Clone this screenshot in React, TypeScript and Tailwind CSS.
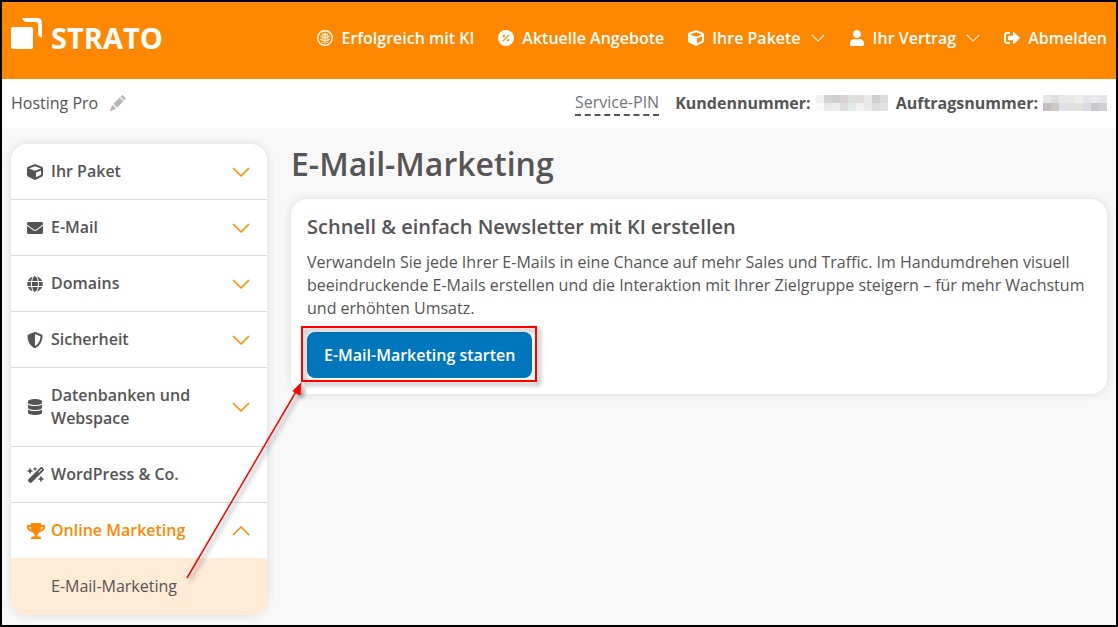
import React, { useState } from "react";
import {
  FaCube,
  FaDatabase,
  FaEnvelope,
  FaGlobe,
  FaShieldAlt,
  FaSignOutAlt,
  FaTrophy,
  FaUser,
} from "react-icons/fa";
import { FaWandMagicSparkles } from "react-icons/fa6";
import { BsPencilFill } from "react-icons/bs";

interface MenuItem {
  label: string;
  icon: React.ReactNode;
  expandable: boolean;
  children?: string[];
}

const menuItems: MenuItem[] = [
  { label: "Ihr Paket", icon: <FaCube />, expandable: true },
  { label: "E-Mail", icon: <FaEnvelope />, expandable: true },
  { label: "Domains", icon: <FaGlobe />, expandable: true },
  { label: "Sicherheit", icon: <FaShieldAlt />, expandable: true },
  { label: "Datenbanken und Webspace", icon: <FaDatabase />, expandable: true },
  { label: "WordPress & Co.", icon: <FaWandMagicSparkles size={18} />, expandable: false },
  { label: "Online Marketing", icon: <FaTrophy size={18} />, expandable: true, children: ["E-Mail-Marketing"] },
];

const customerBlocks = [
  ["#f3f0f1", "#d3d3d3", "#cfcfd3", "#dcd2d6", "#dbe0dd", "#dfdcda", "#e6e8ea", "#cfcfcf", "#dadbdf"],
  ["#fbfafa", "#e9e9e9", "#ececec", "#e0dbdf", "#e4e9e9", "#f2f2f2", "#e8eaed", "#dededf", "#e1e2e3"],
];

const orderBlocks = [
  ["#e6e6e7", "#dfdfdf", "#e8e8e8", "#e7e8e4", "#eeeeec", "#e3e5eb", "#ebebee", "#e6e6e6"],
  ["#c2bfc4", "#cfc9c6", "#dde0e8", "#e0e0e2", "#e1e2dc", "#dadae2", "#c8c8ca", "#cfcfd6"],
];

function Chevron({ up = false, thin = false, className }: { up?: boolean; thin?: boolean; className: string }) {
  return (
    <svg viewBox="0 0 18 10" fill="none" stroke="currentColor" className={className} aria-hidden="true">
      <path d={up ? "M1 9L9 1L17 9" : "M1 1L9 9L17 1"} strokeWidth={thin ? 1.3 : 1.5} />
    </svg>
  );
}

function BrainIcon() {
  return (
    <svg width="16" height="16" viewBox="0 0 16 16" fill="none" stroke="currentColor" aria-hidden="true">
      <circle cx="8" cy="8" r="7.3" strokeWidth="1.4" />
      <path
        d="M8 2.5v11M8 4.5H6.2L5 3.6M8 4.5h1.8L11 3.6M8 7.3H5.5L3.4 6M8 7.3h2.5L12.6 6M8 10.2H5.2L3.2 9M8 10.2h2.8l2-1.2M6.5 12.3H4.8M9.5 12.3h1.7M5.2 5.8h1.3M9.5 5.8h1.3M5 8.8h1.3M9.7 8.8H11"
        strokeWidth="1.1"
      />
    </svg>
  );
}

function PercentIcon() {
  return (
    <svg width="16" height="16" viewBox="0 0 16 16" aria-hidden="true">
      <circle cx="8" cy="8" r="8" fill="currentColor" />
      <path d="M4.8 11.2L11.2 4.8" stroke="#ff8800" strokeWidth="1.2" />
      <g fill="#ff8800">
        <circle cx="5.8" cy="5.9" r="1.2" />
        <circle cx="10.2" cy="10.1" r="1.2" />
      </g>
    </svg>
  );
}

function Logo() {
  return (
    <a href="#" className="flex items-start text-white" aria-label="STRATO">
      <svg width="32" height="32" viewBox="0 0 32 32" fill="currentColor" aria-hidden="true">
        <rect x="0" y="9" width="22" height="22" rx="2" />
        <path d="M11 0H26Q31 0 31 5V20Q27 19 27 15V6Q27 4 25 4H16Q12 4 11 0Z" />
      </svg>
      <span className="mt-1 ml-2 text-[29px] leading-8 font-bold">STRATO</span>
    </a>
  );
}

function Redacted({ rows }: { rows: string[][] }) {
  return (
    <svg width={rows[0].length * 8} height="16" shapeRendering="crispEdges" aria-hidden="true">
      {rows.map((row, y) =>
        row.map((color, x) => (
          <rect key={`${x}-${y}`} x={x * 8} y={y * 8} width="8" height="8" fill={color} />
        ))
      )}
    </svg>
  );
}

function Header() {
  return (
    <header className="h-[77px] pt-4 px-[9px] flex items-start justify-between bg-[#ff8800] text-white">
      <Logo />
      <nav className="mt-2 flex gap-6 leading-6 font-semibold whitespace-nowrap">
        <a href="#" className="flex items-center gap-2">
          <BrainIcon />
          Erfolgreich mit KI
        </a>
        <a href="#" className="flex items-center gap-2">
          <PercentIcon />
          Aktuelle Angebote
        </a>
        <button type="button" className="flex items-center gap-2">
          <FaCube />
          Ihre Pakete
          <Chevron thin className="ml-0.5 w-3.5 h-2" />
        </button>
        <button type="button" className="flex items-center gap-2">
          <FaUser />
          Ihr Vertrag
          <Chevron thin className="ml-0.5 w-3.5 h-2" />
        </button>
        <a href="#" className="flex items-center gap-2">
          <FaSignOutAlt />
          Abmelden
        </a>
      </nav>
    </header>
  );
}

function AccountBar() {
  return (
    <div className="h-[49px] px-[9px] pb-0.5 flex items-center justify-between bg-white whitespace-nowrap">
      <div className="flex items-center gap-3">
        <span>Hosting Pro</span>
        <button type="button" aria-label="Paketname bearbeiten" className="text-[#b8b8b8]">
          <BsPencilFill />
        </button>
      </div>
      <div className="flex items-center gap-4">
        <a href="#" className="border-b-2 border-dashed border-[#555] text-[#6f757b]">
          Service-PIN
        </a>
        <div className="flex items-center gap-2 font-bold">
          <span className="flex items-center gap-[5px]">
            Kundennummer: <Redacted rows={customerBlocks} />
          </span>
          <span className="flex items-center gap-[5px]">
            Auftragsnummer: <Redacted rows={orderBlocks} />
          </span>
        </div>
      </div>
    </div>
  );
}

function Sidebar() {
  const [open, setOpen] = useState("Online Marketing");

  return (
    <nav className="w-64 shrink-0 rounded-2xl bg-white overflow-hidden shadow-[0_0_10px_rgba(0,0,0,0.12)] leading-[23px]">
      <ul className="divide-y divide-[#d9d9d9]">
        {menuItems.map((item) => {
          const active = open === item.label;
          return (
            <li key={item.label}>
              <button
                type="button"
                onClick={() => setOpen(active ? "" : item.label)}
                className={`w-full py-4 pl-4 pr-[17px] flex items-center text-left font-semibold ${
                  active ? "text-[#ff8800]" : ""
                }`}
              >
                <span className="w-6 shrink-0">{item.icon}</span>
                <span className="flex-1 pr-8">{item.label}</span>
                {item.expandable && <Chevron up={active} className="w-[18px] h-2.5 text-[#ff8800]" />}
              </button>
              {active &&
                item.children?.map((child) => (
                  <a key={child} href="#" className="block py-[17px] pl-10 bg-[#ffebd6]">
                    {child}
                  </a>
                ))}
            </li>
          );
        })}
      </ul>
    </nav>
  );
}

// Red frame round the start button and the arrow that leads to it
function Annotation() {
  return (
    <svg
      className="absolute top-0 left-0 pointer-events-none drop-shadow-[3px_3px_2px_rgba(0,0,0,0.4)]"
      width="560"
      height="600"
      fill="none"
      stroke="#ff0000"
      aria-hidden="true"
    >
      <rect x="300" y="325" width="234" height="54" strokeWidth="2" />
      <path d="M185 576L295 388" strokeWidth="1.5" />
      <path d="M299 381L298 393L291 389Z" fill="#ff0000" strokeWidth="1" />
    </svg>
  );
}

function App() {
  return (
    <div className="relative min-h-screen border-2 border-black bg-[#f8f8f8] font-['Open_Sans',sans-serif] text-base text-[#555]">
      <Header />
      <AccountBar />
      <div className="px-[9px] pt-4 pb-2.5 flex items-start gap-6">
        <Sidebar />
        <main className="flex-1 min-w-0">
          <h1 className="mb-4 text-[32px] leading-[39px] font-semibold">E-Mail-Marketing</h1>
          <section className="p-4 rounded-2xl bg-white shadow-[0_0_10px_rgba(0,0,0,0.12)]">
            <h2 className="text-xl leading-6 font-semibold">Schnell & einfach Newsletter mit KI erstellen</h2>
            <p className="my-3 leading-[23px]">
              Verwandeln Sie jede Ihrer E-Mails in eine Chance auf mehr Sales und Traffic. Im Handumdrehen visuell
              beeindruckende E-Mails erstellen und die Interaktion mit Ihrer Zielgruppe steigern – für mehr Wachstum
              und erhöhten Umsatz.
            </p>
            <button type="button" className="block h-[46px] px-[17px] rounded-lg bg-[#0077bc] font-semibold text-white">
              E-Mail-Marketing starten
            </button>
          </section>
        </main>
      </div>
      <Annotation />
    </div>
  );
}

export default App;
